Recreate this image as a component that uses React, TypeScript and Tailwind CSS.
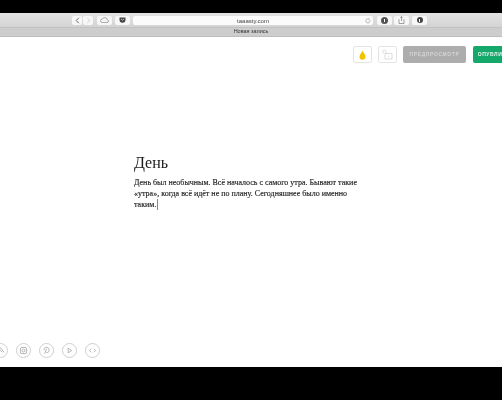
import React from "react";

const Tb = ({ w, children, className = "" }: { w: string; children?: React.ReactNode; className?: string }) => (
  <div className={`h-[9px] ${w} rounded-[2px] bg-[#f7f7f7] flex items-center justify-center ${className}`}>{children}</div>
);

const Circle = ({ children, className = "" }: { children: React.ReactNode; className?: string }) => (
  <div className={`w-[15px] h-[15px] shrink-0 rounded-full border border-[#cfcfcf] flex items-center justify-center ${className}`}>
    <svg width="9" height="9" viewBox="0 0 10 10" fill="none" stroke="#999" strokeWidth="0.8">{children}</svg>
  </div>
);

export default function App() {
  return (
    <div className="w-[502px] h-[400px] overflow-hidden bg-black flex flex-col font-['Liberation_Sans',sans-serif]">
      <div className="h-[13px] shrink-0 bg-black" />
      <div className="h-[15px] shrink-0 bg-gradient-to-b from-[#e4e4e4] to-[#d3d3d3] flex items-center pl-[72px] border-b border-[#c2c2c2]">
        <div className="flex gap-[1px]">
          <Tb w="w-[10px]">
            <svg width="5" height="7" viewBox="0 0 5 7" fill="none" stroke="#555" strokeWidth="0.9"><path d="M3.800 0.800 1.200 3.500 3.800 6.200" /></svg>
          </Tb>
          <Tb w="w-[10px]">
            <svg width="5" height="7" viewBox="0 0 5 7" fill="none" stroke="#ccc" strokeWidth="0.9"><path d="M1.200 0.800 3.800 3.500 1.200 6.200" /></svg>
          </Tb>
        </div>
        <Tb w="w-[15px]" className="ml-[4px]">
          <svg width="9" height="6" viewBox="0 0 9 6" fill="none" stroke="#777" strokeWidth="0.6"><path d="M2.200 5.500h4.800a1.400 1.400 0 0 0 .2-2.800 2.600 2.600 0 0 0-4.900-.6 1.700 1.700 0 0 0-.1 3.400z" /></svg>
        </Tb>
        <Tb w="w-[15px]" className="ml-[3px]">
          <svg width="7" height="6" viewBox="0 0 7 6"><path d="M0.500 0.500h6v2.200a3 3 0 0 1-6 0z" fill="#444" /><path d="M2 2l1.500 1.200L5 2" stroke="#eee" strokeWidth="0.7" fill="none" /></svg>
        </Tb>
        <div className="ml-[3px] w-[240px] h-[9px] rounded-[2px] bg-[#fbfbfb] flex items-center justify-center relative will-change-transform">
          <span className="text-[6px] leading-none text-[#444]">taaasty.com</span>
          <svg className="absolute right-[2px] top-[1.500px]" width="6" height="6" viewBox="0 0 6 6" fill="none" stroke="#888" strokeWidth="0.6"><path d="M4.800 2a2.100 2.100 0 1 1-1.200-1.100M3.400.2 4.400 1 3.500 1.800" /></svg>
        </div>
        <Tb w="w-[15px]" className="ml-[4px]">
          <div className="w-[7px] h-[7px] rounded-full bg-[#444] border-2 border-[#555] flex items-center justify-center"><div className="w-[1px] h-[3px] bg-white" /></div>
        </Tb>
        <Tb w="w-[15px]" className="ml-[2px]">
          <svg width="7" height="8" viewBox="0 0 7 8" fill="none" stroke="#666" strokeWidth="0.6"><path d="M1 3.200v4.300h5V3.200M3.500 5V.6M2.300 1.700 3.500.5l1.200 1.200" /></svg>
        </Tb>
        <Tb w="w-[15px]" className="ml-[3px]">
          <div className="w-[6px] h-[6px] rounded-full bg-[#444] flex items-center justify-center"><div className="w-[1px] h-[3px] bg-white" /></div>
        </Tb>
      </div>
      <div className="h-[9px] shrink-0 bg-[#cdcdcd] border-b border-[#bdbdbd] flex items-center justify-center will-change-transform">
        <span className="text-[5.500px] leading-none text-[#333]">Новая запись</span>
      </div>
      <div className="h-[330px] shrink-0 bg-white flex flex-col relative">
        <div className="flex items-center justify-end pt-[9px] mr-[-29px] shrink-0 will-change-transform">
          <div className="w-[19px] h-[17px] rounded-[2px] border border-[#e4e4e4] flex items-center justify-center">
            <svg width="7" height="10" viewBox="0 0 7 10"><path d="M3.500.5C4.500 3 6.500 4.800 6.500 6.700a3 3 0 0 1-6 0C.5 4.800 2.500 3 3.500.5z" fill="#f2c200" /></svg>
          </div>
          <div className="ml-[6px] w-[19px] h-[17px] rounded-[2px] border border-[#e4e4e4] flex items-center justify-center">
            <svg width="11" height="11" viewBox="0 0 11 11" fill="none" stroke="#c8c8c8" strokeWidth="0.6"><path d="M1 4.500V2.500a1.500 1.500 0 0 1 3 0V4.500M3 4.500h7v5.500H3zM6.500 6.500v1.500" /></svg>
          </div>
          <div className="ml-[6px] w-[63px] h-[17px] rounded-[2px] bg-[#adadad] flex items-center justify-center">
            <span className="text-[5px] leading-none tracking-[0.6px] font-bold text-[#d4d4d4]">ПРЕДПРОСМОТР</span>
          </div>
          <div className="ml-[7px] w-[58px] h-[17px] rounded-[2px] bg-[#14a86b] flex items-center justify-center shrink-0">
            <span className="text-[5px] leading-none tracking-[0.6px] font-bold text-[#e8f6ef]">ОПУБЛИКОВАТЬ</span>
          </div>
        </div>
        <div className="ml-[134px] mt-[90px] w-[226px] font-['Liberation_Serif',serif] text-[#1c1c1c] will-change-transform">
          <h1 className="text-[16px] leading-[20px] font-normal">День</h1>
          <p className="mt-[5px] text-[8px] leading-[10.700px] [-webkit-text-stroke:0.15px_#1c1c1c]">
            День был необычным. Всё началось с самого утра. Бывают такие «утра», когда всё идёт не по плану. Сегодняшнее было именно таким.
            <span className="inline-block w-[1px] h-[11px] bg-[#888] ml-[1px] align-[-3px]" />
          </p>
        </div>
        <div className="mt-auto mb-[9px] ml-[-7px] flex gap-[8px]">
          <Circle><path d="M1 7 5 2l4 5M3 7l2-2 2 2" /></Circle>
          <Circle><rect x="1.500" y="1.500" width="7" height="7" rx="1.800" /><circle cx="5" cy="5" r="1.700" /></Circle>
          <Circle><path d="M3 8.500 5 3M2 4.500a3 3 0 1 1 4.500 2.600c-1 .5-1.800 0-2-.5" /></Circle>
          <Circle><path d="M3.500 2.500 7.500 5 3.500 7.500z" /></Circle>
          <Circle><path d="M3.500 3 1.500 5l2 2M6.500 3l2 2-2 2" /></Circle>
        </div>
      </div>
    </div>
  );
}
